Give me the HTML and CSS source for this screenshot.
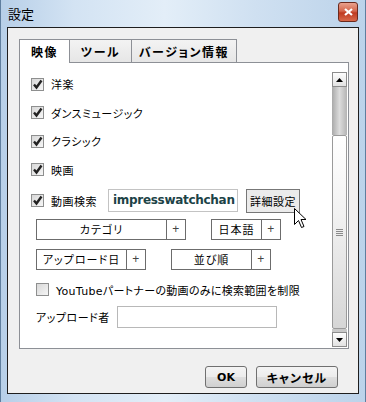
FILE: index.html
```html
<!DOCTYPE html>
<html lang="ja">
<head>
    <meta charset="UTF-8">
    <meta name="viewport" content="width=device-width, initial-scale=1.0">
    <title>設定</title>
    <link rel="stylesheet" href="styles.css">
</head>
<body>
    <div class="window">
        <div class="titlebar">
            <span class="title">設定</span>
            <span class="close">
                <svg width="9" height="8" viewBox="0 0 9 8"><path d="M1 1 L8 7 M8 1 L1 7" stroke="#fff" stroke-width="2.2"/></svg>
            </span>
        </div>

        <div class="client">
            <div class="tabs">
                <div class="tab active">映像</div>
                <div class="tab tab-tool">ツール</div>
                <div class="tab tab-ver">バージョン情報</div>
            </div>

            <div class="panel">
                <div class="content">
                    <div class="row check-row">
                        <span class="checkbox"><svg width="11" height="11" viewBox="0 0 11 11"><path d="M2 5.5 L4.5 8.5 L9.5 1.5" fill="none" stroke="#222" stroke-width="2.4"/></svg></span>
                        <span>洋楽</span>
                    </div>
                    <div class="row check-row">
                        <span class="checkbox"><svg width="11" height="11" viewBox="0 0 11 11"><path d="M2 5.5 L4.5 8.5 L9.5 1.5" fill="none" stroke="#222" stroke-width="2.4"/></svg></span>
                        <span>ダンスミュージック</span>
                    </div>
                    <div class="row check-row">
                        <span class="checkbox"><svg width="11" height="11" viewBox="0 0 11 11"><path d="M2 5.5 L4.5 8.5 L9.5 1.5" fill="none" stroke="#222" stroke-width="2.4"/></svg></span>
                        <span>クラシック</span>
                    </div>
                    <div class="row check-row">
                        <span class="checkbox"><svg width="11" height="11" viewBox="0 0 11 11"><path d="M2 5.5 L4.5 8.5 L9.5 1.5" fill="none" stroke="#222" stroke-width="2.4"/></svg></span>
                        <span>映画</span>
                    </div>
                    <div class="row search-row">
                        <span class="checkbox"><svg width="11" height="11" viewBox="0 0 11 11"><path d="M2 5.5 L4.5 8.5 L9.5 1.5" fill="none" stroke="#222" stroke-width="2.4"/></svg></span>
                        <span class="search-label">動画検索</span>
                        <div class="search-input">impresswatchchan</div>
                        <div class="detail-btn">詳細設定</div>
                    </div>

                    <div class="select-row">
                        <div class="select sel-category"><span class="select-label">カテゴリ</span><span class="select-plus">+</span></div>
                        <div class="select sel-lang"><span class="select-label">日本語</span><span class="select-plus">+</span></div>
                    </div>
                    <div class="select-row second">
                        <div class="select sel-date"><span class="select-label">アップロード日</span><span class="select-plus">+</span></div>
                        <div class="select sel-sort"><span class="select-label">並び順</span><span class="select-plus">+</span></div>
                    </div>

                    <div class="row partner-row">
                        <span class="checkbox"></span>
                        <span>YouTubeパートナーの動画のみに検索範囲を制限</span>
                    </div>

                    <div class="row uploader-row">
                        <span class="uploader-label">アップロード者</span>
                        <div class="uploader-input"></div>
                    </div>
                </div>

                <div class="scrollbar">
                    <div class="sb-btn">
                        <svg width="7" height="4" viewBox="0 0 7 4"><path d="M0 4 L3.5 0 L7 4 Z" fill="#000"/></svg>
                    </div>
                    <div class="sb-track"></div>
                    <div class="sb-thumb">
                        <svg width="7" height="7" viewBox="0 0 7 7"><path d="M0 0.5 H7 M0 2.5 H7 M0 4.5 H7 M0 6.5 H7" stroke="#8a8a8a" stroke-width="1"/></svg>
                    </div>
                    <div class="sb-track-end"></div>
                    <div class="sb-btn">
                        <svg width="7" height="4" viewBox="0 0 7 4"><path d="M0 0 L3.5 4 L7 0 Z" fill="#000"/></svg>
                    </div>
                </div>
            </div>

            <div class="footer">
                <div class="btn btn-ok">OK</div>
                <div class="btn btn-cancel">キャンセル</div>
            </div>
        </div>

        <!-- mouse pointer over the detail button -->
        <svg class="cursor" width="13" height="21" viewBox="0 0 13 21">
            <path d="M0.5 0.5 L0.5 16.5 L4.5 12.5 L7.5 19.5 L10 18.5 L7 11.5 L12 11.5 Z" fill="#fff" stroke="#000" stroke-width="1"/>
        </svg>
    </div>
</body>
</html>
```

FILE: styles.css
```css
body {
    margin: 0;
    font-family: "Noto Sans CJK JP", "Liberation Sans", sans-serif;
    font-size: 11px;
    color: #000;
}
.window {
    position: relative;
    width: 366px;
    height: 402px;
    box-sizing: border-box;
    padding: 0 6px;
    background: linear-gradient(90deg, #b7cfe8 0%, #d3e3f3 20%, #e3eef8 45%, #cfe0f1 70%, #bcd3ea 100%);
    border-left: 1px solid #5f7e9e;
    border-right: 1px solid #5f7e9e;
    overflow: hidden;
}
.titlebar {
    height: 27px;
    display: flex;
    align-items: center;
    justify-content: space-between;
    margin: 0 -5px 0 1px;
}
.title {
    font-size: 13px;
    margin-top: -1px;
}
.close {
    width: 18px;
    height: 18px;
    margin-top: -3px;
    margin-right: 6px;
    border: 1px solid #6b2a1e;
    border-radius: 3px;
    background: linear-gradient(#e9a28e 0%, #d4664c 45%, #bf3a20 55%, #d8694a 100%);
    display: flex;
    align-items: center;
    justify-content: center;
}
.client {
    height: 367px;
    box-sizing: border-box;
    border: 1px solid #1e1e1e;
    background: #f0f0f0;
    padding: 11px 10px 0 11px;
    font-feature-settings: "palt";
}
.tabs {
    display: flex;
    height: 23px;
}
.tab {
    box-sizing: border-box;
    height: 23px;
    border: 1px solid #8d9096;
    border-bottom: none;
    border-left: none;
    background: linear-gradient(#f3f3f3, #e6e6e6);
    font-size: 12px;
    font-weight: bold;
    display: flex;
    align-items: center;
    justify-content: center;
    letter-spacing: 1.5px;
}
.tab.active {
    width: 51px;
    border-left: 1px solid #8d9096;
    background: #fff;
    height: 24px;
    position: relative;
    z-index: 1;
}
.tab-tool {
    width: 62px;
}
.tab-ver {
    width: 105px;
}
.panel {
    width: 330px;
    height: 287px;
    box-sizing: border-box;
    border: 1px solid #8d9096;
    background: #fff;
    display: flex;
}
.content {
    flex: 1;
    padding: 7px 0 0 11px;
    letter-spacing: 0.5px;
}
.row {
    display: flex;
    align-items: center;
}
.check-row {
    height: 28.5px;
}
.checkbox {
    width: 13px;
    height: 13px;
    box-sizing: border-box;
    border: 1px solid #8e8f8f;
    background: linear-gradient(135deg, #d8d8d8, #f6f6f6);
    margin-right: 7px;
    display: flex;
    align-items: center;
    justify-content: center;
    flex-shrink: 0;
}
.search-row {
    height: 23px;
    margin-top: 5px;
}
.search-label {
    width: 57px;
}
.search-input {
    width: 130px;
    height: 23px;
    box-sizing: border-box;
    border: 1px solid #c3c3c3;
    padding: 0 0 0 4px;
    font-family: "DejaVu Sans", sans-serif;
    font-weight: bold;
    font-size: 12px;
    letter-spacing: -0.3px;
    color: #1c4347;
    white-space: nowrap;
    overflow: hidden;
    line-height: 21px;
}
.detail-btn {
    width: 54px;
    height: 24px;
    box-sizing: border-box;
    margin-left: 8px;
    border: 1px solid #777;
    background: #ebebeb;
    display: flex;
    align-items: center;
    justify-content: center;
}
.select-row {
    display: flex;
    margin: 7px 0 0 5px;
}
.select-row.second {
    margin-top: 9px;
}
.select {
    display: flex;
    height: 21px;
    box-sizing: border-box;
    border: 1px solid #6c6c6c;
}
.select-label {
    flex: 1;
    text-align: center;
    line-height: 19px;
    letter-spacing: 1px;
}
.select-plus {
    width: 18px;
    border-left: 1px solid #6c6c6c;
    text-align: center;
    line-height: 19px;
    color: #444;
    font-family: "Liberation Sans", sans-serif;
    font-size: 12px;
}
.sel-category {
    width: 150px;
}
.sel-lang {
    width: 70px;
    margin-left: 25px;
}
.sel-date {
    width: 110px;
}
.sel-sort {
    width: 100px;
    margin-left: 25px;
}
.partner-row {
    height: 13px;
    margin: 13px 0 0 5px;
    font-family: "DejaVu Sans", "Noto Sans CJK JP", sans-serif;
    letter-spacing: 0.3px;
}
.uploader-row {
    margin: 10px 0 0 5px;
}
.uploader-label {
    width: 81px;
}
.uploader-input {
    width: 160px;
    height: 22px;
    box-sizing: border-box;
    border: 1px solid #b8b8b8;
}
.scrollbar {
    width: 15px;
    margin: 9px 1px 1px 0;
    display: flex;
    flex-direction: column;
}
.sb-btn {
    height: 15px;
    box-sizing: border-box;
    border: 1px solid #8c8c8c;
    background: linear-gradient(#fdfdfd, #e2e2e2);
    display: flex;
    align-items: center;
    justify-content: center;
}
.sb-track {
    height: 48px;
    background: linear-gradient(90deg, #a9a9a9, #dcdcdc 50%, #b4b4b4);
}
.sb-thumb {
    flex: 1;
    box-sizing: border-box;
    border: 1px solid #9a9a9a;
    border-radius: 2px;
    background: linear-gradient(#ffffff 0%, #f2f2f2 40%, #d6d6d6 100%);
    display: flex;
    align-items: center;
    justify-content: center;
}
.sb-track-end {
    height: 3px;
    background: #c8c8c8;
}
.footer {
    display: flex;
    justify-content: flex-end;
    gap: 9px;
    padding: 17px 10px 0 0;
}
.btn {
    height: 22px;
    box-sizing: border-box;
    border: 1px solid #707070;
    border-radius: 3px;
    background: linear-gradient(#f4f4f4 0%, #ececec 50%, #dedede 51%, #d0d0d0 100%);
    font-size: 12px;
    font-weight: bold;
    letter-spacing: 1px;
    display: flex;
    align-items: center;
    justify-content: center;
}
.btn-ok {
    width: 42px;
    font-family: "DejaVu Sans", sans-serif;
    font-size: 11px;
    letter-spacing: 0;
}
.btn-cancel {
    width: 82px;
}
.cursor {
    position: absolute;
    left: 293px;
    top: 208px;
}
```
